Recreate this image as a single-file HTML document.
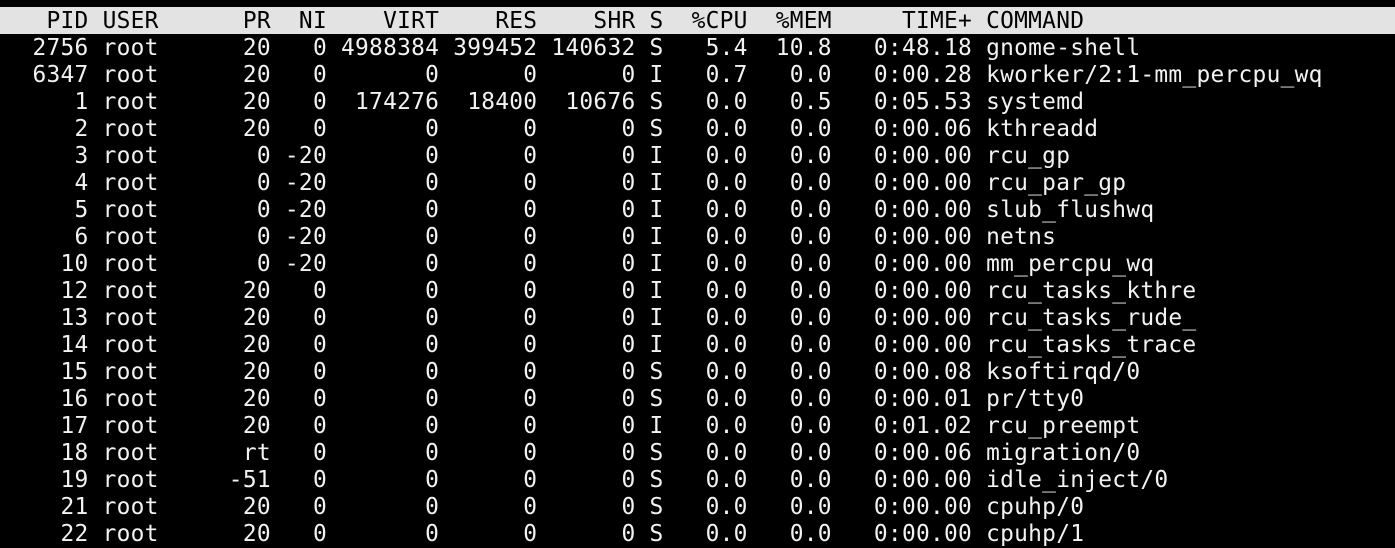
<!DOCTYPE html>
<html><head><meta charset="utf-8"><style>
html,body{margin:0;padding:0;background:#000;width:1395px;height:543px;overflow:hidden}
.t{position:absolute;left:-9.6px;top:7px;font-family:"DejaVu Sans Mono","Liberation Mono",monospace;font-size:22.84px;letter-spacing:0.28px;color:#f2f2f2;white-space:pre}
.l{height:27px;line-height:28px}
.h{background:#e3e3e3;color:#000;width:1420px}
</style></head><body><div class="t"><div class="l h">    PID USER      PR  NI    VIRT    RES    SHR S  %CPU  %MEM     TIME+ COMMAND</div><div class="l">   2756 root      20   0 4988384 399452 140632 S   5.4  10.8   0:48.18 gnome-shell</div><div class="l">   6347 root      20   0       0      0      0 I   0.7   0.0   0:00.28 kworker/2:1-mm_percpu_wq</div><div class="l">      1 root      20   0  174276  18400  10676 S   0.0   0.5   0:05.53 systemd</div><div class="l">      2 root      20   0       0      0      0 S   0.0   0.0   0:00.06 kthreadd</div><div class="l">      3 root       0 -20       0      0      0 I   0.0   0.0   0:00.00 rcu_gp</div><div class="l">      4 root       0 -20       0      0      0 I   0.0   0.0   0:00.00 rcu_par_gp</div><div class="l">      5 root       0 -20       0      0      0 I   0.0   0.0   0:00.00 slub_flushwq</div><div class="l">      6 root       0 -20       0      0      0 I   0.0   0.0   0:00.00 netns</div><div class="l">     10 root       0 -20       0      0      0 I   0.0   0.0   0:00.00 mm_percpu_wq</div><div class="l">     12 root      20   0       0      0      0 I   0.0   0.0   0:00.00 rcu_tasks_kthre</div><div class="l">     13 root      20   0       0      0      0 I   0.0   0.0   0:00.00 rcu_tasks_rude_</div><div class="l">     14 root      20   0       0      0      0 I   0.0   0.0   0:00.00 rcu_tasks_trace</div><div class="l">     15 root      20   0       0      0      0 S   0.0   0.0   0:00.08 ksoftirqd/0</div><div class="l">     16 root      20   0       0      0      0 S   0.0   0.0   0:00.01 pr/tty0</div><div class="l">     17 root      20   0       0      0      0 I   0.0   0.0   0:01.02 rcu_preempt</div><div class="l">     18 root      rt   0       0      0      0 S   0.0   0.0   0:00.06 migration/0</div><div class="l">     19 root     -51   0       0      0      0 S   0.0   0.0   0:00.00 idle_inject/0</div><div class="l">     21 root      20   0       0      0      0 S   0.0   0.0   0:00.00 cpuhp/0</div><div class="l">     22 root      20   0       0      0      0 S   0.0   0.0   0:00.00 cpuhp/1</div></div></body></html>
